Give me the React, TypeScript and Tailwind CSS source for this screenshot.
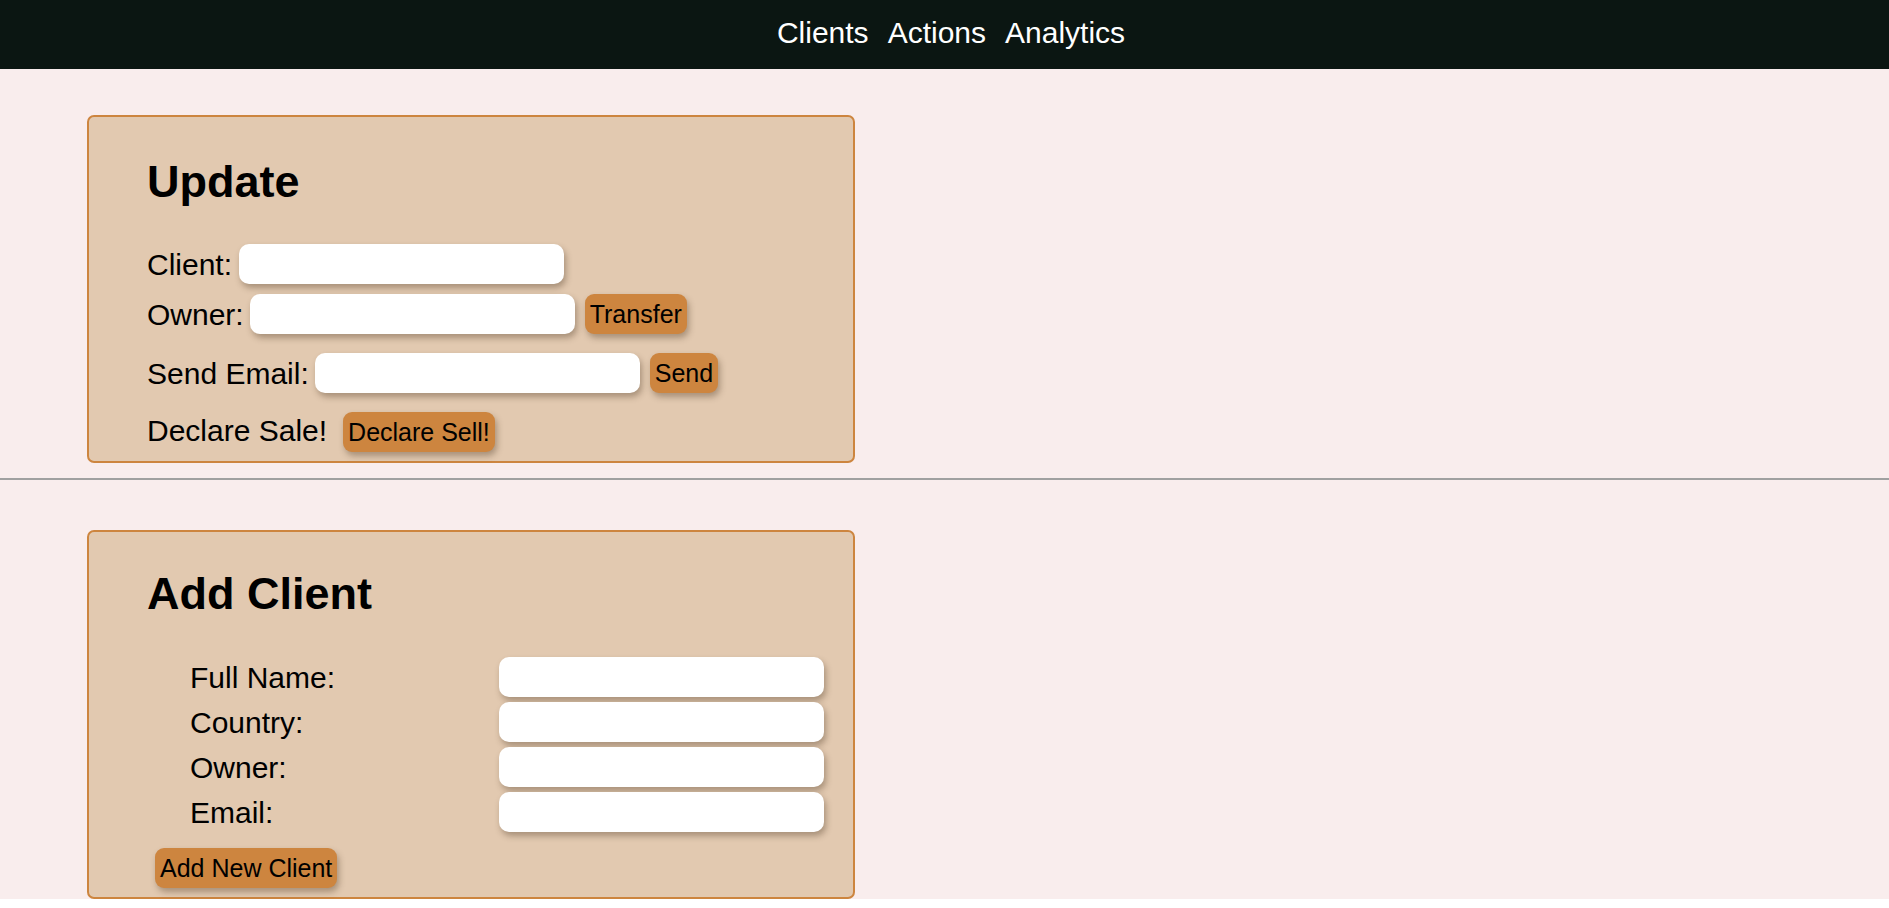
// Client admin page: top nav, an "Update" card and an "Add Client" card.

const FONT = "font-['Liberation_Sans',Arial,sans-serif]";

const NAV_LINKS = ["Clients", "Actions", "Analytics"];

const NEW_CLIENT_FIELDS = ["Full Name:", "Country:", "Owner:", "Email:"];

function TextBox() {
  return (
    <input
      type="text"
      className="block h-[40px] w-[325px] rounded-[10px] border-0 bg-white px-2 text-[20px] shadow-[2px_4px_6px_rgba(60,40,20,0.35)] outline-none"
    />
  );
}

function ActionButton({ children }: { children: string }) {
  return (
    <button
      type="button"
      className="block h-[40px] rounded-[9px] bg-[#cd853f] px-[5px] text-[25px] leading-none text-black shadow-[2px_4px_6px_rgba(60,40,20,0.35)]"
    >
      {children}
    </button>
  );
}

function Card({ title, children }: { title: string; children: React.ReactNode }) {
  return (
    <section className="w-[768px] rounded-[7px] border-2 border-[#cd853f] bg-[#e2c9b0] pb-[9px] pl-[58px]">
      <h2 className="text-[45px] font-bold leading-none">{title}</h2>
      {children}
    </section>
  );
}

export default function App() {
  return (
    <div className={`${FONT} bg-[#f9eded] text-black`}>
      <nav className="flex h-[69px] items-center justify-center gap-[19px] bg-[#0b1612] pb-[4px] pl-[13px] text-[30px] text-white">
        {NAV_LINKS.map((l) => (
          <a key={l} href="#" className="leading-normal">
            {l}
          </a>
        ))}
      </nav>

      <div className="pl-[87px] pt-[46px]">
        <div className="[&>section>h2]:pt-[42px]">
          <Card title="Update">
            <div className="mt-[40px] flex h-[40px] items-center text-[30px]">
              <span>Client:</span>
              <span className="ml-[7px]">
                <TextBox />
              </span>
            </div>
            <div className="mt-[10px] flex h-[40px] items-center text-[30px]">
              <span>Owner:</span>
              <span className="ml-[6px]">
                <TextBox />
              </span>
              <span className="ml-[10px]">
                <ActionButton>Transfer</ActionButton>
              </span>
            </div>
            <div className="mt-[19px] flex h-[40px] items-center text-[30px]">
              <span>Send Email:</span>
              <span className="ml-[6px]">
                <TextBox />
              </span>
              <span className="ml-[10px]">
                <ActionButton>Send</ActionButton>
              </span>
            </div>
            <div className="mt-[19px] flex h-[40px] items-center text-[30px]">
              <span className="relative top-[-2px]">Declare Sale!</span>
              <span className="ml-[16px]">
                <ActionButton>Declare Sell!</ActionButton>
              </span>
            </div>
          </Card>
        </div>
      </div>

      <div className="mt-[15px] h-[2px] bg-[#a0a0a0]" />

      <div className="pl-[87px] pt-[50px]">
        <div className="[&>section>h2]:pt-[39px]">
          <Card title="Add Client">
            <div className="ml-[43px] mt-[41px] grid grid-cols-[309px_325px] gap-y-[5px] text-[30px]">
              {NEW_CLIENT_FIELDS.map((f) => (
                <div key={f} className="contents">
                  <span className="flex h-[40px] items-center">{f}</span>
                  <TextBox />
                </div>
              ))}
            </div>
            <div className="ml-[8px] mt-[16px]">
              <ActionButton>Add New Client</ActionButton>
            </div>
          </Card>
        </div>
      </div>
    </div>
  );
}
